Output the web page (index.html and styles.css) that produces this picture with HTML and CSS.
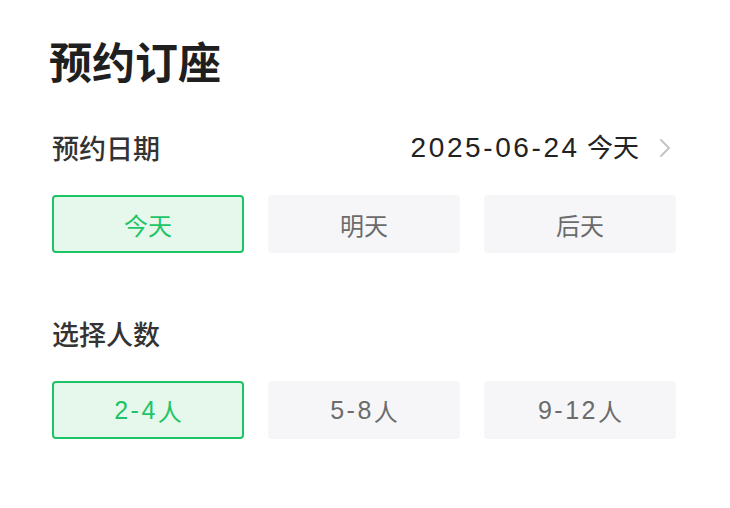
FILE: index.html
```html
<!DOCTYPE html>
<html lang="zh-CN">
<head>
<meta charset="utf-8">
<title>预约订座</title>
<link rel="stylesheet" href="styles.css">
</head>
<body>
<div class="page">
  <h1 class="title">预约订座</h1>

  <section class="section">
    <div class="section-head">
      <span class="label">预约日期</span>
      <span class="date">
        <span class="date-text"><span class="num">2025-06-24</span> 今天</span>
        <svg class="chev" width="12" height="20" viewBox="0 0 12 20"><polyline points="2,2 10,10 2,18" fill="none" stroke="#c4c4c6" stroke-width="2" stroke-linecap="round" stroke-linejoin="round"/></svg>
      </span>
    </div>
    <div class="options">
      <div class="opt active">今天</div>
      <div class="opt">明天</div>
      <div class="opt">后天</div>
    </div>
  </section>

  <section class="section second">
    <div class="section-head">
      <span class="label">选择人数</span>
    </div>
    <div class="options">
      <div class="opt active"><span class="num">2-4</span>人</div>
      <div class="opt"><span class="num">5-8</span>人</div>
      <div class="opt"><span class="num">9-12</span>人</div>
    </div>
  </section>
</div>
</body>
</html>
```

FILE: styles.css
```css
* { box-sizing: border-box; }
html, body { margin: 0; padding: 0; background: #fff; }
body {
  font-family: "Liberation Sans", "Noto Sans CJK SC", sans-serif;
  color: #333;
}
.page {
  width: 730px;
  padding: 31px 54px 0 52px;
}
.title {
  margin: 0;
  font-family: "Noto Sans CJK SC", sans-serif;
  font-size: 43px;
  font-weight: 700;
  line-height: 58px;
  color: #1f1f1f;
  margin-left: -3px;
}
.section { margin-top: 39px; }
.section.second { margin-top: 61px; }
.section-head {
  display: flex;
  align-items: center;
  justify-content: space-between;
  height: 40px;
}
.label {
  font-family: "Noto Sans CJK SC", sans-serif;
  font-size: 27px;
  font-weight: 500;
  color: #333;
  line-height: 40px;
}
.date {
  display: flex;
  align-items: center;
  gap: 20px;
  padding-right: 5px;
}
.date-text {
  font-size: 26px;
  color: #222;
  line-height: 40px;
}
.date-text .num {
  font-size: 28px;
  letter-spacing: 2.6px;
}
.chev { display: block; }
.options {
  margin-top: 27px;
  display: grid;
  grid-template-columns: repeat(3, 1fr);
  gap: 24px;
}
.opt {
  height: 58px;
  border-radius: 4px;
  background: #f6f6f8;
  color: #6b6b6b;
  font-size: 24px;
  display: flex;
  align-items: center;
  justify-content: center;
}
.opt .num {
  font-size: 25px;
  letter-spacing: 2.5px;
}
.opt.active {
  background: #e6f8ec;
  border: 2px solid #1dc466;
  color: #1dc466;
}
```
